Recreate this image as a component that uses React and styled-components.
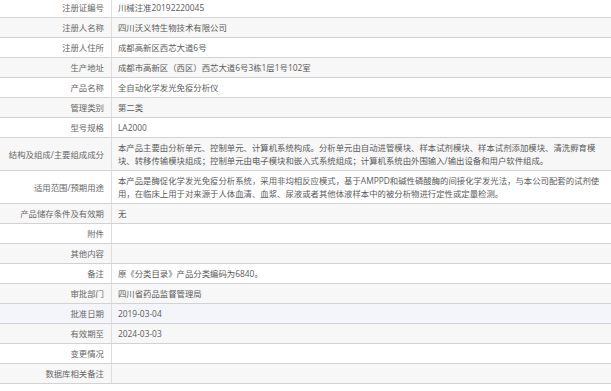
import React from "react";
import styled, { createGlobalStyle } from "styled-components";

const Global = createGlobalStyle`
  html, body { margin: 0; padding: 0; background: #fff; }
  body { font-family: "Open Sans", "Noto Sans CJK SC", sans-serif; }
`;

const Table = styled.div`
  margin-top: -2px;
  width: 611px;
  display: flex;
  flex-direction: column;
  font-size: 8.4px;
  line-height: 13px;
  color: #666;
`;

const bg = { white: "#ffffff", gray: "#f7f7f7", hover: "#f4f5fa" };

const Row = styled.div`
  display: grid;
  grid-template-columns: 112px 1fr;
  background: ${(p) => bg[p.$tone]};
  border-bottom: 1px solid #d2d2d2;
`;

const Label = styled.div`
  padding: 3px 7px 3px 0;
  text-align: right;
  border-right: 1px solid #dddddd;
  display: flex;
  align-items: center;
  justify-content: flex-end;
  color: #666;
  white-space: nowrap;
`;

const Value = styled.div`
  padding: 3px 0 3px 6px;
  min-height: 13px;
  color: #5a5a5a;
  white-space: nowrap;
`;

const Line = styled.div``;

const rows = [
  ["注册证编号", ["川械注准20192220045"]],
  ["注册人名称", ["四川沃义特生物技术有限公司"]],
  ["注册人住所", ["成都高新区西芯大道6号"]],
  ["生产地址", ["成都市高新区（西区）西芯大道6号3栋1层1号102室"]],
  ["产品名称", ["全自动化学发光免疫分析仪"]],
  ["管理类别", ["第二类"]],
  ["型号规格", ["LA2000"]],
  [
    "结构及组成/主要组成成分",
    [
      "本产品主要由分析单元、控制单元、计算机系统构成。分析单元由自动进管模块、样本试剂模块、样本试剂添加模块、清洗孵育模",
      "块、转移传输模块组成；控制单元由电子模块和嵌入式系统组成；计算机系统由外围输入/输出设备和用户软件组成。",
    ],
  ],
  [
    "适用范围/预期用途",
    [
      "本产品是酶促化学发光免疫分析系统，采用非均相反应模式，基于AMPPD和碱性磷酸酶的间接化学发光法，与本公司配套的试剂使",
      "用，在临床上用于对来源于人体血清、血浆、尿液或者其他体液样本中的被分析物进行定性或定量检测。",
    ],
  ],
  ["产品储存条件及有效期", ["无"]],
  ["附件", []],
  ["其他内容", []],
  ["备注", ["原《分类目录》产品分类编码为6840。"]],
  ["审批部门", ["四川省药品监督管理局"]],
  ["批准日期", ["2019-03-04"]],
  ["有效期至", ["2024-03-03"]],
  ["变更情况", []],
  ["数据库相关备注", []],
];

export default function App() {
  return (
    <>
      <Global />
      <Table>
        {rows.map(([label, lines], i) => {
          const tone = i === 14 ? "hover" : i % 2 === 0 ? "white" : "gray";
          return (
            <Row key={label} $tone={tone}>
              <Label>{label}</Label>
              <Value>
                {lines.map((l) => (
                  <Line key={l}>{l}</Line>
                ))}
              </Value>
            </Row>
          );
        })}
      </Table>
    </>
  );
}
